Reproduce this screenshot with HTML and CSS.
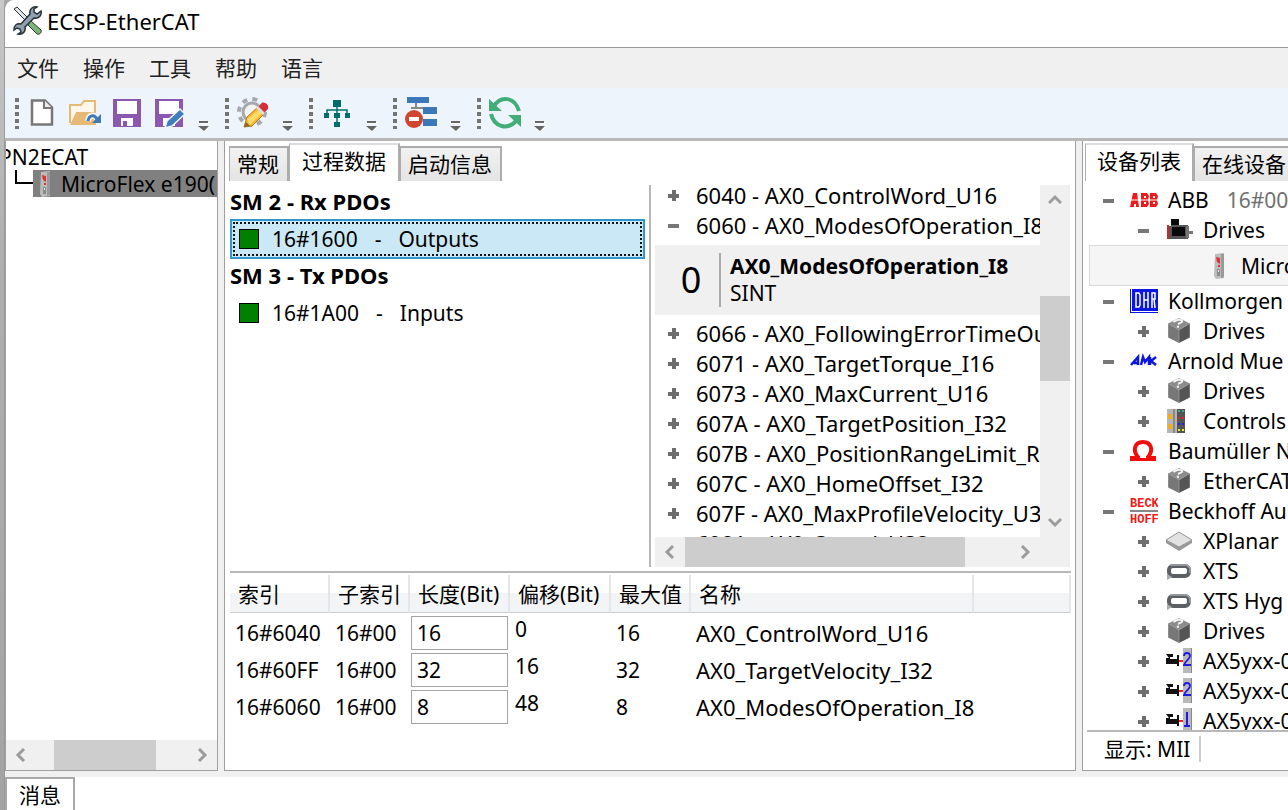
FILE: index.html
```html
<!DOCTYPE html>
<html lang="zh-CN">
<head>
<meta charset="utf-8">
<title>ECSP-EtherCAT</title>
<link rel="stylesheet" href="styles.css">
</head>
<body>
<svg class="defs" aria-hidden="true">
  <symbol id="plus" viewBox="0 0 11 11"><path d="M0 4h4V0h4v4h3v4H8v3H4V8H0z" fill="#6e6e6e"/></symbol>
  <symbol id="minus" viewBox="0 0 11 11"><path d="M0 4h11v4H0z" fill="#777"/></symbol>
  <symbol id="chev" viewBox="0 0 14 14"><path d="M1 10l6-6 6 6" fill="none" stroke="#9c9c9c" stroke-width="3"/></symbol>
  <symbol id="more" viewBox="0 0 12 12"><path d="M1 2h10v2H1zM1 6h11l-6 6z" fill="#fff"/><path d="M1 1h9v2H1zM0 6h11L6 11z" fill="#666"/></symbol>
  <symbol id="cube" viewBox="0 0 22 24"><path d="M11 0l10 5-10 6L1 5z" fill="#8c8c8c"/><path d="M1 5l10 6v12L1 18z" fill="#777"/><path d="M21 5l-10 6v12l10-5z" fill="#555"/><path d="M11 11v12M1 5l10 6 10-6" fill="none" stroke="#999" stroke-width=".7"/><path d="M6 4c2-3 8-3 8-1s-4 1-3 3M9 8h2" fill="none" stroke="#f4f4f4" stroke-width="1.800"/></symbol>
  <symbol id="drive" viewBox="0 0 12 26"><path d="M2 1l9-1v25l-8 1-2-3z" fill="#bcbcbc"/><path d="M8 1h3v23l-3 1z" fill="#999"/><path d="M3 4l4 1v6l-3-2zM5 12h2v2H5z" fill="#d33"/><path d="M4 16h3v7H4z" fill="#8a8a8a"/><path d="M5 17h1v2H5z" fill="#eee"/></symbol>
  <symbol id="xts" viewBox="0 0 28 26"><rect x="4" y="8" width="20" height="10" rx="4" fill="#fff" stroke="#5c6064" stroke-width="4"/><path d="M5 7h17l3 3v5" fill="none" stroke="#a4a8ab" stroke-width="1.500"/><path d="M2 16l5 3-5 3z" fill="#aaa"/></symbol>
  <symbol id="valve" viewBox="0 0 28 26"><path d="M1 6h7v3H5v2h7V7h2v11h-2v-2H1v-6h3z" fill="#111"/><path d="M14 12h4v2h-4z" fill="#e22"/><path d="M18 0h9v25h-9z" fill="#b9b9b9"/><path d="M26 0h1v25h-1z" fill="#888"/></symbol>
</svg>
<div class="screen">
<div class="behind"></div>
<div class="app">
  <header class="titlebar">
    <svg width="30" height="30" viewBox="0 0 30 30"><path d="M1 3l3-2 14 14-2 3z" fill="#dfe6ea" stroke="#333" stroke-width="1"/><path d="M28 5l-4 3-3-2v-3l3-2c-4-1-8 2-7 7L8 18c-4-1-7 1-7 6l3-2 3 1 1 3-3 2c5 1 8-3 7-7l9-9c5 1 8-3 7-7z" fill="#8fa0b0" stroke="#2a3238" stroke-width="1.500"/><path d="M18 15l10 9c1 2-1 5-4 4l-9-9z" fill="#7eb37c" stroke="#263b2b" stroke-width="1"/></svg>
    <h1>ECSP-EtherCAT</h1>
  </header>
  <nav class="menu"><button>文件</button><button>操作</button><button>工具</button><button>帮助</button><button>语言</button></nav>
  <div class="toolbar">
    <div class="group first"><span class="grip"></span>
      <button aria-label="新建"><svg width="30" height="32" viewBox="0 0 30 32"><path d="M5 3.500h13l7 7v17H5z" fill="#fff" stroke="#777" stroke-width="2.500"/><path d="M17 3v8h8" fill="#eee" stroke="#777" stroke-width="2"/></svg></button>
      <button aria-label="打开"><svg width="34" height="32" viewBox="0 0 34 32"><path d="M3 26V8h11l3-4h11v12" fill="#fff8ea" stroke="#e6ba76" stroke-width="2"/><path d="M3 28l6-13h20v13z" fill="#e6ba76"/><path d="M21 24c1-7 7-7 9-2" fill="none" stroke="#eef4fc" stroke-width="6"/><path d="M21 24c1-6 6-7 9-2" fill="none" stroke="#3f7ab5" stroke-width="3"/><path d="M34 17v9h-9z" fill="#3f7ab5"/></svg></button>
      <button aria-label="保存"><svg width="31" height="30" viewBox="-1 0 31 30"><path d="M1 1h28v28H1z" fill="#8c57ae"/><path d="M5 3h20v13H5zM9 20h12v8H9z" fill="#fff"/><path d="M11 23h4v5h-4z" fill="#8c57ae"/></svg></button>
      <button aria-label="另存为"><svg width="34" height="30" viewBox="-2 0 34 30"><path d="M1 1h28v28H1z" fill="#8c57ae"/><path d="M5 3h20v13H5zM9 20h12v8H9z" fill="#fff"/><path d="M11 30l2-7 13-12 5 5-13 12z" fill="#3f7fbd" stroke="#eef4fc" stroke-width="1.500"/></svg></button>
      <svg class="more" width="12" height="12"><use href="#more"/></svg></div>
    <div class="group"><span class="grip"></span>
      <button aria-label="编辑设置"><svg width="34" height="34" viewBox="0 0 34 34"><circle cx="16" cy="16" r="13" fill="none" stroke="#a6a8ae" stroke-width="4" stroke-dasharray="5 5.200"/><circle cx="16" cy="16" r="9" fill="#f2f2f2" stroke="#a6a8ae" stroke-width="3"/><path d="M8 31l3-10L22 11l7 6-13 13z" fill="#f5b92e" stroke="#b77718" stroke-width="1"/><path d="M11 23l13-10 3 3-13 13z" fill="#ffda67"/><path d="M22 11l4-4c4-1 7 2 6 6l-4 4z" fill="#d52f38"/><path d="M20 12l2-2 7 7-2 2z" fill="#ddd"/><path d="M8 31l2-5 4 4z" fill="#8f6425"/></svg></button>
      <svg class="more" width="12" height="12"><use href="#more"/></svg></div>
    <div class="group"><span class="grip"></span>
      <button aria-label="网络"><svg width="32" height="28" viewBox="-3 0 32 28"><path d="M14 7v18M4 16v-5h20v5" fill="none" stroke="#007070" stroke-width="1.500"/><path d="M10 1h8v7h-8zM1 14h5v5H1zM11 14h6v5h-6zM22 14h5v5h-5zM11 23h6v5h-6z" fill="#006c6c"/></svg></button>
      <svg class="more" width="12" height="12"><use href="#more"/></svg></div>
    <div class="group"><span class="grip"></span>
      <button aria-label="断开"><svg width="34" height="34" viewBox="0 0 34 34"><path d="M12 7v6M7 12h20" stroke="#888" stroke-width="2"/><path d="M3 1h22v6H3zM19 11h14v7H19zM19 23h14v7H19z" fill="#3b78b7"/><circle cx="10" cy="23" r="9" fill="#cf452f"/><path d="M5 21h10v4H5z" fill="#fff"/></svg></button>
      <svg class="more" width="12" height="12"><use href="#more"/></svg></div>
    <div class="group"><span class="grip"></span>
      <button aria-label="刷新"><svg width="34" height="34" viewBox="0 0 34 34"><path d="M6 10C13-1 27 1 31 15M3 18c3 13 17 17 26 6" fill="none" stroke="#43ad78" stroke-width="4"/><path d="M1 3v12h13zM33 19v12L20 19z" fill="#43ad78"/></svg></button>
      <svg class="more" width="12" height="12"><use href="#more"/></svg></div>
  </div>
  <main class="work">
    <section class="panel project">
      <div class="project-tree"><div class="root">PN2ECAT</div>
        <div class="child"><span class="branch"></span><div class="node"><svg width="12" height="26"><use href="#drive"/></svg>MicroFlex e190(</div></div></div>
      <div class="hbar left"><svg class="lt" width="14" height="14"><use href="#chev"/></svg><span class="thumb"></span><svg class="rt" width="14" height="14"><use href="#chev"/></svg></div>
    </section>
    <section class="panel center">
      <div class="tabs"><button class="tab">常规</button><button class="tab active">过程数据</button><button class="tab">启动信息</button></div>
      <div class="split">
        <div class="pdos">
          <h2>SM 2 - Rx PDOs</h2>
          <div class="pdo selected"><i></i><span>16#1600</span><span>-</span><span>Outputs</span></div>
          <h2>SM 3 - Tx PDOs</h2>
          <div class="pdo"><i></i><span>16#1A00</span><span>-</span><span>Inputs</span></div>
        </div>
        <div class="objects">
          <div class="object-row">
            <div class="object-list">
              <div class="obj"><svg><use href="#plus"/></svg>6040 - AX0_ControlWord_U16</div>
              <div class="obj"><svg><use href="#minus"/></svg>6060 - AX0_ModesOfOperation_I8</div>
              <div class="detail"><span class="value">0</span><div class="desc"><b>AX0_ModesOfOperation_I8</b><span>SINT</span></div></div>
              <div class="obj"><svg><use href="#plus"/></svg>6066 - AX0_FollowingErrorTimeOu</div>
              <div class="obj"><svg><use href="#plus"/></svg>6071 - AX0_TargetTorque_I16</div>
              <div class="obj"><svg><use href="#plus"/></svg>6073 - AX0_MaxCurrent_U16</div>
              <div class="obj"><svg><use href="#plus"/></svg>607A - AX0_TargetPosition_I32</div>
              <div class="obj"><svg><use href="#plus"/></svg>607B - AX0_PositionRangeLimit_RE</div>
              <div class="obj"><svg><use href="#plus"/></svg>607C - AX0_HomeOffset_I32</div>
              <div class="obj"><svg><use href="#plus"/></svg>607F - AX0_MaxProfileVelocity_U3</div>
              <div class="obj"><svg></svg>6081 - AX0_Speed_U32</div>
            </div>
            <div class="vbar"><svg width="14" height="14"><use href="#chev"/></svg><span class="thumb"></span><svg class="dn" width="14" height="14"><use href="#chev"/></svg></div>
          </div>
          <div class="hbar mid"><svg class="lt" width="14" height="14"><use href="#chev"/></svg><span class="thumb"></span><svg class="rt" width="14" height="14"><use href="#chev"/></svg></div>
        </div>
      </div>
      <div class="entries">
        <table>
          <colgroup><col class="c1"><col class="c2"><col class="c3"><col class="c4"><col class="c5"><col class="c6"><col></colgroup>
          <thead><tr><th>索引</th><th>子索引</th><th id="len">长度(Bit)</th><th>偏移(Bit)</th><th>最大值</th><th>名称</th><th></th></tr></thead>
          <tbody>
            <tr><td>16#6040</td><td>16#00</td><td class="edit"><input aria-labelledby="len" value="16"></td><td class="offset">0</td><td>16</td><td class="name">AX0_ControlWord_U16</td><td></td></tr>
            <tr><td>16#60FF</td><td>16#00</td><td class="edit"><input aria-labelledby="len" value="32"></td><td class="offset">16</td><td>32</td><td class="name">AX0_TargetVelocity_I32</td><td></td></tr>
            <tr><td>16#6060</td><td>16#00</td><td class="edit"><input aria-labelledby="len" value="8"></td><td class="offset">48</td><td>8</td><td class="name">AX0_ModesOfOperation_I8</td><td></td></tr>
          </tbody>
        </table>
      </div>
    </section>
    <section class="panel devices">
      <div class="tabs"><button class="tab active">设备列表</button><button class="tab">在线设备</button></div>
      <div class="device-tree">
        <div class="dev"><svg class="tg"><use href="#minus"/></svg><svg class="ic" viewBox="0 0 28 26"><path d="M3 6h4l2 14H6v-3H4v3H0zM11 6h6l2 3-1 4 1 4-2 3h-6zM20 6h6l2 3-1 4 1 4-2 3h-6z" fill="#f01818"/><path d="M0 13h28" stroke="#fff" stroke-width="1"/><path d="M14 9h2v2h-2zM14 15h2v2h-2zM23 9h2v2h-2zM23 15h2v2h-2z" fill="#fff"/></svg>ABB<span class="vendor">16#00</span></div>
        <div class="dev sub"><svg class="tg"><use href="#minus"/></svg><svg class="ic" viewBox="0 0 28 26"><path d="M6 2h8v6h9v14H4V9h2z" fill="#555"/><path d="M6 2h8v6H6zM7 10h13v9H7z" fill="#0a0a0a"/><path d="M2 8h2v14H2z" fill="#d22"/><path d="M21 9h3v12h-3zM24 14h4v3h-4z" fill="#777"/></svg>Drives</div>
        <div class="dev leaf"><svg width="12" height="26"><use href="#drive"/></svg>Micro</div>
        <div class="dev"><svg class="tg"><use href="#minus"/></svg><svg class="ic" viewBox="0 0 28 26"><path d="M0 1h1v23h27v1H0zM2 1h26v22H2z" fill="#0b16e0"/><path d="M6 5v14h3l1-2V7L9 5zM14 4v16M14 12h4M18 4v16M22 20V5h3v6h-3M24 11l1 9" fill="none" stroke="#fff" stroke-width="1.500"/></svg>Kollmorgen</div>
        <div class="dev sub"><svg class="tg"><use href="#plus"/></svg><svg class="ic"><use href="#cube"/></svg>Drives</div>
        <div class="dev"><svg class="tg"><use href="#minus"/></svg><svg class="ic" viewBox="0 0 28 26"><path d="M1 17l7-8v8M4 15h4M11 17l2-8 2 5 4-5v8M20 17V9M26 9l-5 4 5 4" fill="none" stroke="#0b16e0" stroke-width="2.500"/></svg>Arnold Mue</div>
        <div class="dev sub"><svg class="tg"><use href="#plus"/></svg><svg class="ic"><use href="#cube"/></svg>Drives</div>
        <div class="dev sub"><svg class="tg"><use href="#plus"/></svg><svg class="ic" viewBox="0 0 28 26"><path d="M2 1h18v24H2z" fill="#b5b5b5"/><path d="M8 1h2v24H8z" fill="#888"/><path d="M3 6h4v5H3zM3 16h4v5H3z" fill="#f3ae16"/><path d="M12 1h8v24h-8z" fill="#555"/><path d="M13 3h6" stroke="#3a8" stroke-width="2" stroke-dasharray="2 2"/><path d="M13 10h6" stroke="#e22" stroke-width="2" stroke-dasharray="2 2"/><path d="M13 16h6" stroke="#22e" stroke-width="2" stroke-dasharray="2 2"/><path d="M13 22h6" stroke="#ee2" stroke-width="2" stroke-dasharray="2 2"/></svg>Controls</div>
        <div class="dev"><svg class="tg"><use href="#minus"/></svg><svg class="ic" viewBox="0 0 28 26"><path d="M8 19c-6-7-3-15 5-15s11 8 5 15" fill="none" stroke="#f20d0d" stroke-width="4"/><path d="M0 18h10v5H0zM16 18h10v5H16zM8 20h10v3H8z" fill="#f20d0d"/></svg>Baumüller N</div>
        <div class="dev sub"><svg class="tg"><use href="#plus"/></svg><svg class="ic"><use href="#cube"/></svg>EtherCAT</div>
        <div class="dev"><svg class="tg"><use href="#minus"/></svg><svg class="ic" viewBox="0 0 28 26"><path d="M0 12h28v2H0z" fill="#888"/><text class="logo-text" x="0" y="9">BECK</text><text class="logo-text" x="0" y="25">HOFF</text></svg>Beckhoff Au</div>
        <div class="dev sub"><svg class="tg"><use href="#plus"/></svg><svg class="ic" viewBox="0 0 28 26"><path d="M14 4l13 8v3l-13 8L1 15v-3z" fill="#999"/><path d="M14 4l13 8-13 7L1 12z" fill="#e2e2e2" stroke="#999"/></svg>XPlanar</div>
        <div class="dev sub"><svg class="tg"><use href="#plus"/></svg><svg class="ic"><use href="#xts"/></svg>XTS</div>
        <div class="dev sub"><svg class="tg"><use href="#plus"/></svg><svg class="ic"><use href="#xts"/></svg>XTS Hyg</div>
        <div class="dev sub"><svg class="tg"><use href="#plus"/></svg><svg class="ic"><use href="#cube"/></svg>Drives</div>
        <div class="dev sub"><svg class="tg"><use href="#plus"/></svg><svg class="ic" viewBox="0 0 28 26"><use href="#valve"/><path d="M19 8c0-4 6-4 6 0 0 3-5 5-6 9h7" fill="none" stroke="#1c1ce8" stroke-width="1.800"/></svg>AX5yxx-0</div>
        <div class="dev sub"><svg class="tg"><use href="#plus"/></svg><svg class="ic" viewBox="0 0 28 26"><use href="#valve"/><path d="M19 8c0-4 6-4 6 0 0 3-5 5-6 9h7" fill="none" stroke="#1c1ce8" stroke-width="1.800"/></svg>AX5yxx-0</div>
        <div class="dev sub"><svg class="tg"><use href="#plus"/></svg><svg class="ic" viewBox="0 0 28 26"><use href="#valve"/><path d="M22 4v14M19 18h6" fill="none" stroke="#1c1ce8" stroke-width="2"/></svg>AX5yxx-0</div>
      </div>
      <div class="filter"><span>显示: MII</span></div>
    </section>
  </main>
  <footer class="messages"><button>消息</button></footer>
</div>
</div>
</body>
</html>
```

FILE: styles.css
```css
* { box-sizing: border-box; }
body {
  margin: 0;
  color: #000;
  font: 21px/30px "Noto Sans", "Noto Sans CJK SC", sans-serif;
}
button, input { font: inherit; color: inherit; margin: 0; }
button { border: 0; padding: 0; background: none; }
svg { flex: none; display: block; }
.defs { width: 0; height: 0; position: absolute; }
.screen { display: flex; height: 100vh; overflow: hidden; background: #a8a8a8; }
.behind { flex: 0 0 4px; background: linear-gradient(#c8c8c8, #b0b0b0 30%, #a3a3a3); }
.app {
  flex: 1;
  min-width: 0;
  display: flex;
  flex-direction: column;
  background: #f0f0f0;
  border-left: 1px solid #999;
  border-top-left-radius: 10px;
  overflow: hidden;
}
.titlebar {
  flex: 0 0 48px;
  display: flex;
  align-items: center;
  gap: 4px;
  padding: 0 8px 6px;
  background: #fff;
  border-bottom: 1px solid #999;
}
.titlebar h1 { margin: 0; font-size: 22px; font-weight: 400; }
.menu { flex: 0 0 40px; display: flex; align-items: center; gap: 24px; padding-left: 12px; color: #222; }
.toolbar {
  flex: 0 0 53px;
  display: flex;
  background: #eef4fc;
  border-bottom: 3px solid #b8b8b8;
}
.group { display: flex; align-items: center; width: 84px; padding-left: 10px; gap: 7px; }
.group.first { width: 210px; }
.group.first .grip { margin-right: 1px; }
.group.first button { margin-right: 3px; }
.grip {
  flex: none;
  width: 4px;
  height: 31px;
  background: repeating-linear-gradient(#747474 0 4px, transparent 4px 7px);
}
.more { margin-left: auto; margin-right: 5px; align-self: flex-end; margin-bottom: 6px; }
.work { flex: 1; min-height: 0; display: flex; gap: 6px; }
.panel {
  display: flex;
  flex-direction: column;
  background: #fff;
  border: 1px solid #a0a0a0;
  border-top: 0;
  overflow: hidden;
  white-space: nowrap;
}
.project { flex: 0 0 213px; }
.center { flex: 1; min-width: 0; }
.devices { flex: 0 0 206px; border-right: 0; }
.project-tree { flex: 1; }
.root { height: 29px; padding-top: 1px; margin-left: -7px; }
.child { display: flex; }
.branch { width: 18px; height: 14px; margin-left: 9px; border: solid #000; border-width: 0 0 2px 2px; }
.node { flex: 1; display: flex; align-items: center; gap: 10px; height: 27px; padding-left: 6px; background: #808080; }
.hbar { flex: 0 0 30px; display: flex; align-items: center; background: #f0f0f0; }
.thumb { background: #cdcdcd; }
.hbar .thumb { height: 100%; }
.left { padding: 0 8px; }
.left .thumb { width: 102px; margin: 0 auto 0 26px; }
.mid { padding: 0 38px 0 8px; }
.mid .thumb { width: 280px; margin: 0 auto 0 8px; }
.lt { transform: rotate(-90deg); }
.rt { transform: rotate(90deg); }
.dn { transform: rotate(180deg); }
.tabs { flex: 0 0 40px; display: flex; align-items: flex-end; padding-left: 4px; }
.tab {
  height: 35px;
  padding: 0 7px 2px;
  border: 1px solid #acacac;
  border-width: 2px 2px 0 1px;
  background: linear-gradient(#f1f1f1, #e4e4e4);
}
.tab.active { height: 38px; padding: 0 12px 4px; border-top-color: #ddd; background: #fff; }
.center .tab { padding-right: 8px; }
.center .tab.active { padding-right: 12px; }
.split { flex: 0 0 386px; height: 386px; display: flex; margin: 0 5px; padding-top: 4px; }
.pdos { flex: 0 1 421px; padding-right: 4px; border-right: 2px solid #b8b8b8; }
.pdos h2 { margin: 0; height: 34px; padding: 1px 0 0; font-size: 22px; line-height: 30px; }
.pdo { display: flex; align-items: center; gap: 17px; height: 40px; padding: 0 9px; }
.pdo i { width: 20px; height: 20px; margin-right: -4px; background: #008000; border: 1px solid #000; }
.pdo.selected { background: #cbe8f6; border: 2px solid #3399cc; padding: 0 7px; outline: 2px dotted #111; outline-offset: -5px; }
.objects { flex: 1; min-width: 0; display: flex; flex-direction: column; padding-left: 4px; }
.object-row { flex: 1; min-height: 0; display: flex; }
.object-list { flex: 1; min-width: 0; overflow: hidden; font-size: 22px; }
.obj { display: flex; align-items: center; gap: 17px; height: 30px; padding-left: 13px; }
.obj:first-child { margin-top: -5px; }
.obj svg { width: 11px; height: 11px; }
.detail { display: flex; align-items: center; height: 70px; margin: 5px 0 3px; background: #f0f0f0; }
.value { flex: 0 0 64px; padding-left: 8px; text-align: center; font-size: 36px; }
.desc { display: flex; flex-direction: column; height: 54px; padding-left: 9px; border-left: 2px solid #aaa; font-size: 21px; line-height: 27px; }
.vbar { flex: 0 0 30px; display: flex; flex-direction: column; align-items: center; padding: 8px 0; background: #f0f0f0; }
.vbar .thumb { width: 100%; height: 85px; margin: 89px 0 auto; }
.entries { flex: 1; margin: 4px 4px 0 5px; padding-top: 2px; border-top: 2px solid #b8b8b8; }
table { width: 100%; table-layout: fixed; border-collapse: separate; border-spacing: 0; }
.c1 { width: 100px; } .c2 { width: 80px; } .c3 { width: 100px; } .c4 { width: 101px; } .c5 { width: 80px; } .c6 { width: 283px; }
th {
  height: 38px;
  padding: 0 0 0 8px;
  text-align: left;
  font-weight: 400;
  background: linear-gradient(#fff 50%, #f3f4f6 50%);
  border-right: 2px solid #e4e6e9;
  border-bottom: 1px solid #ccc;
}
td { height: 37px; padding: 3px 5px 0; vertical-align: middle; }
.name { font-size: 22px; }
.edit { padding: 3px 0 0 1px; }
.edit input { display: block; width: 97px; height: 34px; padding: 0 5px; border: 1px solid #a4a4a4; background: #fff; }
.offset { padding: 0 5px 5px; }
.devices .tabs { padding-left: 2px; }
.devices .active { padding: 0 11px 4px; }
.device-tree { flex: 1; min-height: 0; overflow: hidden; padding: 4px 0 0 6px; }
.dev { display: flex; align-items: center; height: 30px; padding-left: 14px; }
.tg { width: 11px; height: 11px; margin-right: 16px; }
.ic { width: 28px; height: 26px; margin-right: 10px; }
.vendor { margin-left: 18px; color: #707070; }
.sub { padding-left: 49px; }
.leaf { height: 41px; padding-left: 123px; gap: 16px; background: #f5f5f5; border: 1px solid #d9d9d9; border-right: 0; }
.logo-text { font: bold 12px "Liberation Mono", monospace; fill: #f01818; }
.filter { flex: 0 0 40px; display: flex; align-items: center; margin-left: 4px; padding: 0 0 4px 17px; border-top: 2px solid #b8b8b8; }
.filter span { padding-right: 9px; border-right: 2px solid #ccc; line-height: 26px; }
.messages { flex: 0 0 33px; display: flex; margin-top: 6px; background: #fff; }
.messages button { width: 70px; border: 2px solid #a8a8a8; border-bottom: 0; }
```
